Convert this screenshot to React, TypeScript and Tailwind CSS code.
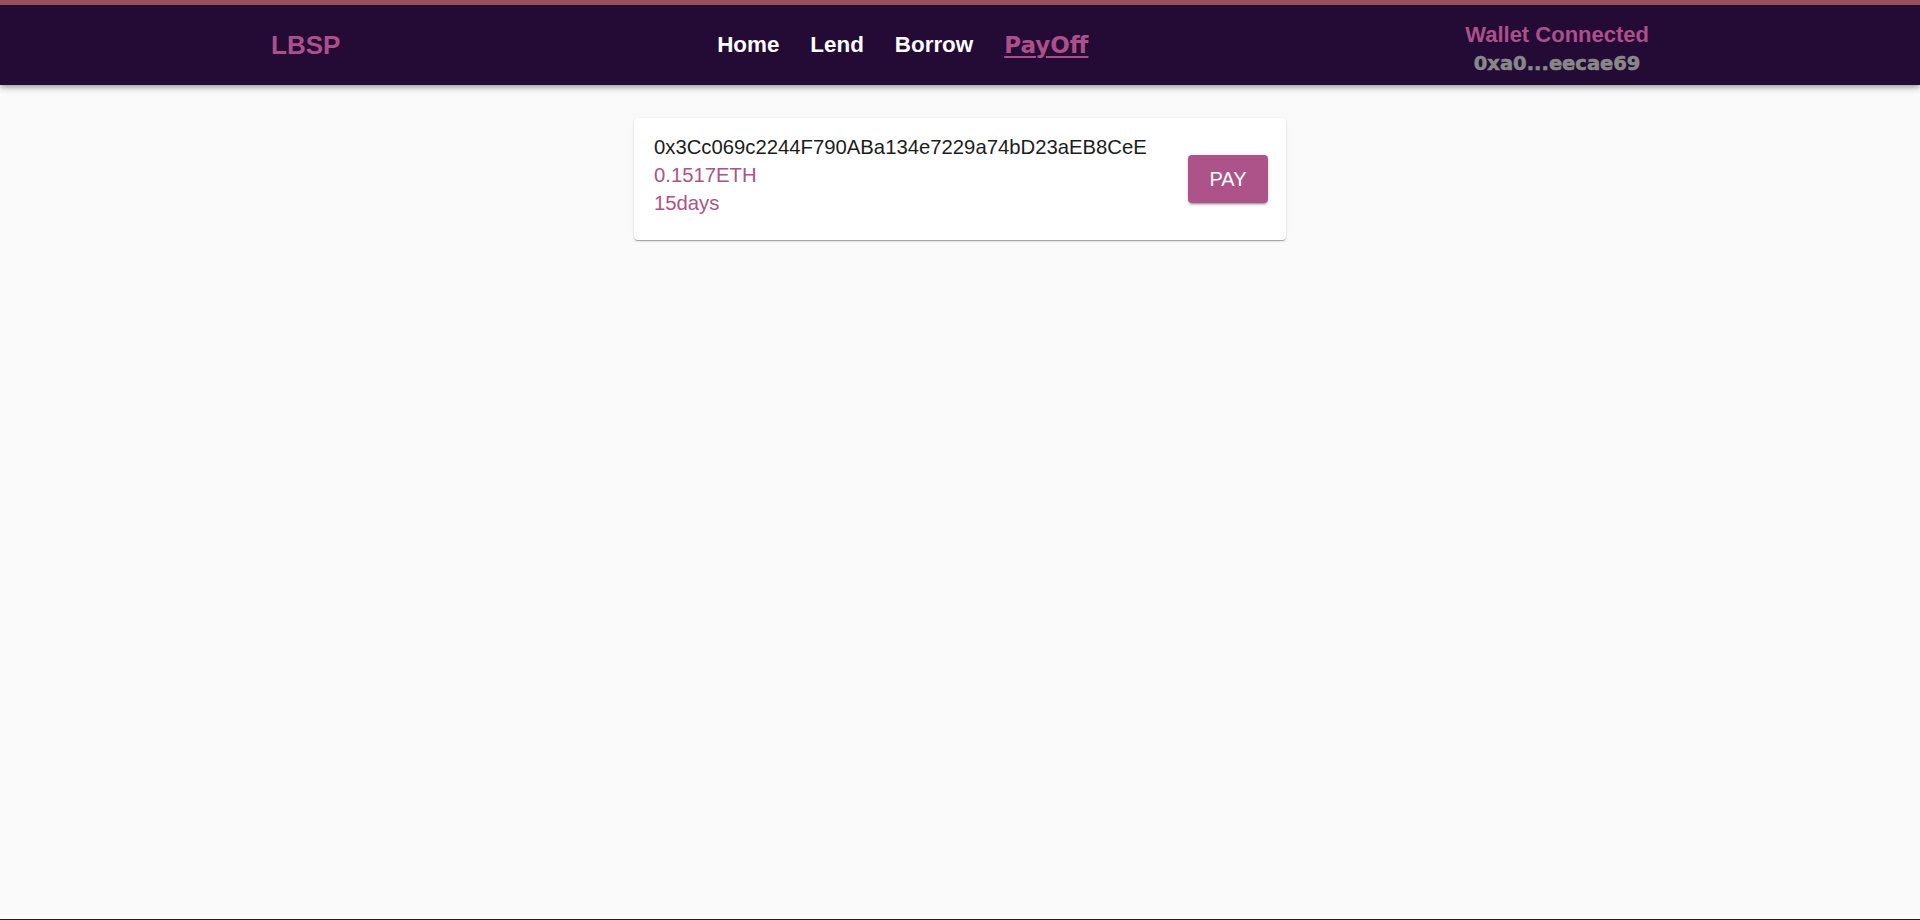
import React from 'react';

const navLinks = ['Home', 'Lend', 'Borrow', 'PayOff'];
const activeLink = 'PayOff';

const loan = {
    address: '0x3Cc069c2244F790ABa134e7229a74bD23aEB8CeE',
    amount: '0.1517ETH',
    duration: '15days',
};

const Header = () => (
    <header className="bg-[#230b36] border-t-[5px] border-[#98515c] shadow-[0px_2px_4px_-1px_rgba(0,0,0,0.2),0px_4px_5px_0px_rgba(0,0,0,0.14),0px_1px_10px_0px_rgba(0,0,0,0.12)]">
        <div className="h-[80px] px-[271px] flex items-center justify-between font-['Liberation_Sans',Arial,sans-serif]">
            <span className="text-[26px] font-bold text-[#ad4f8a]">LBSP</span>

            <nav className="flex items-center gap-[31px]">
                {navLinks.map((link) =>
                    link === activeLink ? (
                        <a
                            key={link}
                            href="#"
                            className="text-[23px] font-bold text-[#ad4f8a] underline decoration-[2px] underline-offset-[3px] font-['DejaVu_Sans',Verdana,sans-serif]"
                        >
                            {link}
                        </a>
                    ) : (
                        <a key={link} href="#" className="text-[22.4px] font-bold text-white">
                            {link}
                        </a>
                    ),
                )}
            </nav>

            <div className="flex flex-col items-center mt-[9px]">
                <span className="text-[22px] leading-[28px] font-bold text-[#ad4f8a]">Wallet Connected</span>
                <span className="text-[19.5px] leading-[30px] font-bold text-[#888888] [-webkit-text-stroke:0.6px_#888888] font-['DejaVu_Sans',Verdana,sans-serif]">
                    0xa0...eecae69
                </span>
            </div>
        </div>
    </header>
);

const LoanCard = () => (
    <div className="w-[652px] mx-auto mt-[33px] bg-white rounded-[4px] shadow-[0px_2px_1px_-1px_rgba(0,0,0,0.2),0px_1px_1px_0px_rgba(0,0,0,0.14),0px_1px_3px_0px_rgba(0,0,0,0.12)] pl-[20px] pr-[18px] pt-[15px] pb-[23px] flex items-center justify-between font-['Liberation_Sans',Arial,sans-serif]">
        <div className="flex flex-col text-[20.3px] leading-[28px]">
            <span className="text-[#1c1c1c]">{loan.address}</span>
            <span className="text-[#ad5389]">{loan.amount}</span>
            <span className="text-[#ad5389]">{loan.duration}</span>
        </div>
        <button
            type="button"
            className="w-[80px] h-[48px] mt-[7px] rounded-[4px] bg-[#ad5389] text-white text-[20px] shadow-[0px_3px_1px_-2px_rgba(0,0,0,0.2),0px_2px_2px_0px_rgba(0,0,0,0.14),0px_1px_5px_0px_rgba(0,0,0,0.12)]"
        >
            PAY
        </button>
    </div>
);

export default function App() {
    return (
        <div className="min-h-[920px] bg-[#fafafa] flex flex-col">
            <Header />
            <main className="flex-1">
                <LoanCard />
            </main>
            <div className="h-[1px] bg-[#1e1a1e]" />
        </div>
    );
}
